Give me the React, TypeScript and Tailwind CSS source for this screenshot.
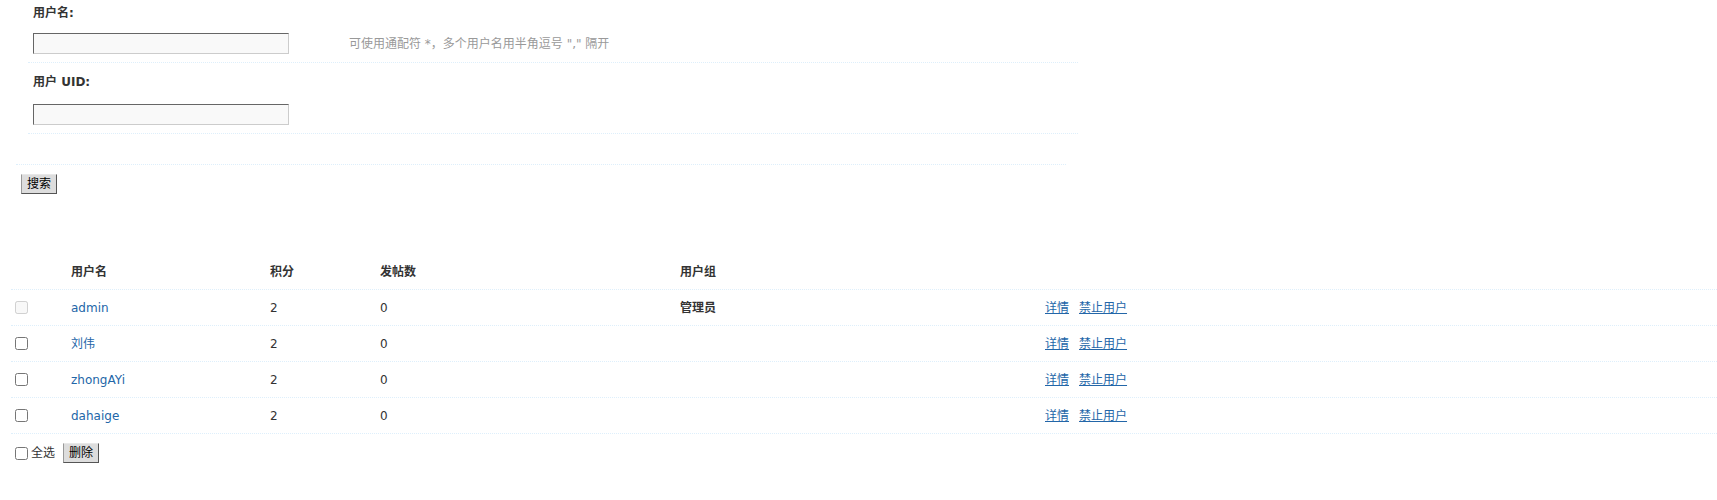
import React from 'react';

const users = [
  { name: 'admin', credits: 2, posts: 0, group: '管理员', disabled: true },
  { name: '刘伟', credits: 2, posts: 0, group: '', disabled: false },
  { name: 'zhongAYi', credits: 2, posts: 0, group: '', disabled: false },
  { name: 'dahaige', credits: 2, posts: 0, group: '', disabled: false },
];

const font = "font-['DejaVu_Sans','Noto_Sans_CJK_SC',sans-serif]";

const Btn = ({ label }: { label: string }) => (
  <button className="h-[20px] w-[36px] bg-[#dddddd] border border-t-[#e8e8e8] border-l-[#999] border-r-[#555] border-b-[#555] text-[12px] leading-none text-black">
    {label}
  </button>
);

const TextInput = () => (
  <input
    type="text"
    className="block h-[21px] w-[256px] bg-[#f9f9f9] border border-t-[#666] border-l-[#666] border-r-[#ccc] border-b-[#ccc] outline-none"
  />
);

export default function App() {
  return (
    <div className={`${font} text-[12px] text-[#333] bg-white min-h-[500px]`}>
      {/* Search form */}
      <div className="ml-[28px] w-[1050px]">
        <div className="h-[25px] flex items-center pl-[5px] font-bold">用户名:</div>
        <div className="flex items-center pl-[5px] pt-[8px] pb-[8px] border-b border-dotted border-[#deeffb]">
          <TextInput />
          <span className="ml-[60px] text-[#999]">可使用通配符 *，多个用户名用半角逗号 "," 隔开</span>
        </div>
        <div className="h-[33px] flex items-center pt-[4px] pl-[5px] font-bold">用户 UID:</div>
        <div className="flex items-center pl-[5px] pt-[8px] pb-[8px] border-b border-dotted border-[#deeffb]">
          <TextInput />
        </div>
      </div>
      <div className="ml-[16px] w-[1050px] h-[31px] border-b border-dotted border-[#deeffb]" />
      <div className="flex pl-[21px] pt-[9px]">
        <Btn label="搜索" />
      </div>

      {/* User list */}
      <div className="ml-[11px] mt-[60px]">
        <div className="flex h-[36px] items-center font-bold border-b border-dotted border-[#deeffb]">
          <div className="w-[55px]" />
          <div className="w-[199px] pl-[5px]">用户名</div>
          <div className="w-[110px] pl-[5px]">积分</div>
          <div className="w-[300px] pl-[5px]">发帖数</div>
          <div className="w-[365px] pl-[5px]">用户组</div>
          <div className="flex-1" />
        </div>
        {users.map((u) => (
          <div key={u.name} className="flex h-[36px] items-center border-b border-dotted border-[#deeffb]">
            <div className="w-[55px] pl-[4px] flex items-center">
              <input type="checkbox" disabled={u.disabled} className="m-0 w-[13px] h-[13px]" />
            </div>
            <div className="w-[199px] pl-[5px]">
              <a className="text-[#2366a8]">{u.name}</a>
            </div>
            <div className="w-[110px] pl-[5px]">{u.credits}</div>
            <div className="w-[300px] pl-[5px]">{u.posts}</div>
            <div className="w-[365px] pl-[5px] font-bold">{u.group}</div>
            <div className="flex-1 pl-[5px] flex gap-[10px]">
              <a className="text-[#2366a8] underline">详情</a>
              <a className="text-[#2366a8] underline">禁止用户</a>
            </div>
          </div>
        ))}
        <div className="flex items-center h-[38px]">
          <input type="checkbox" className="m-0 ml-[4px] w-[13px] h-[13px]" />
          <span className="ml-[3px] text-[#333]">全选</span>
          <span className="ml-[8px] flex">
            <Btn label="删除" />
          </span>
        </div>
      </div>
    </div>
  );
}
